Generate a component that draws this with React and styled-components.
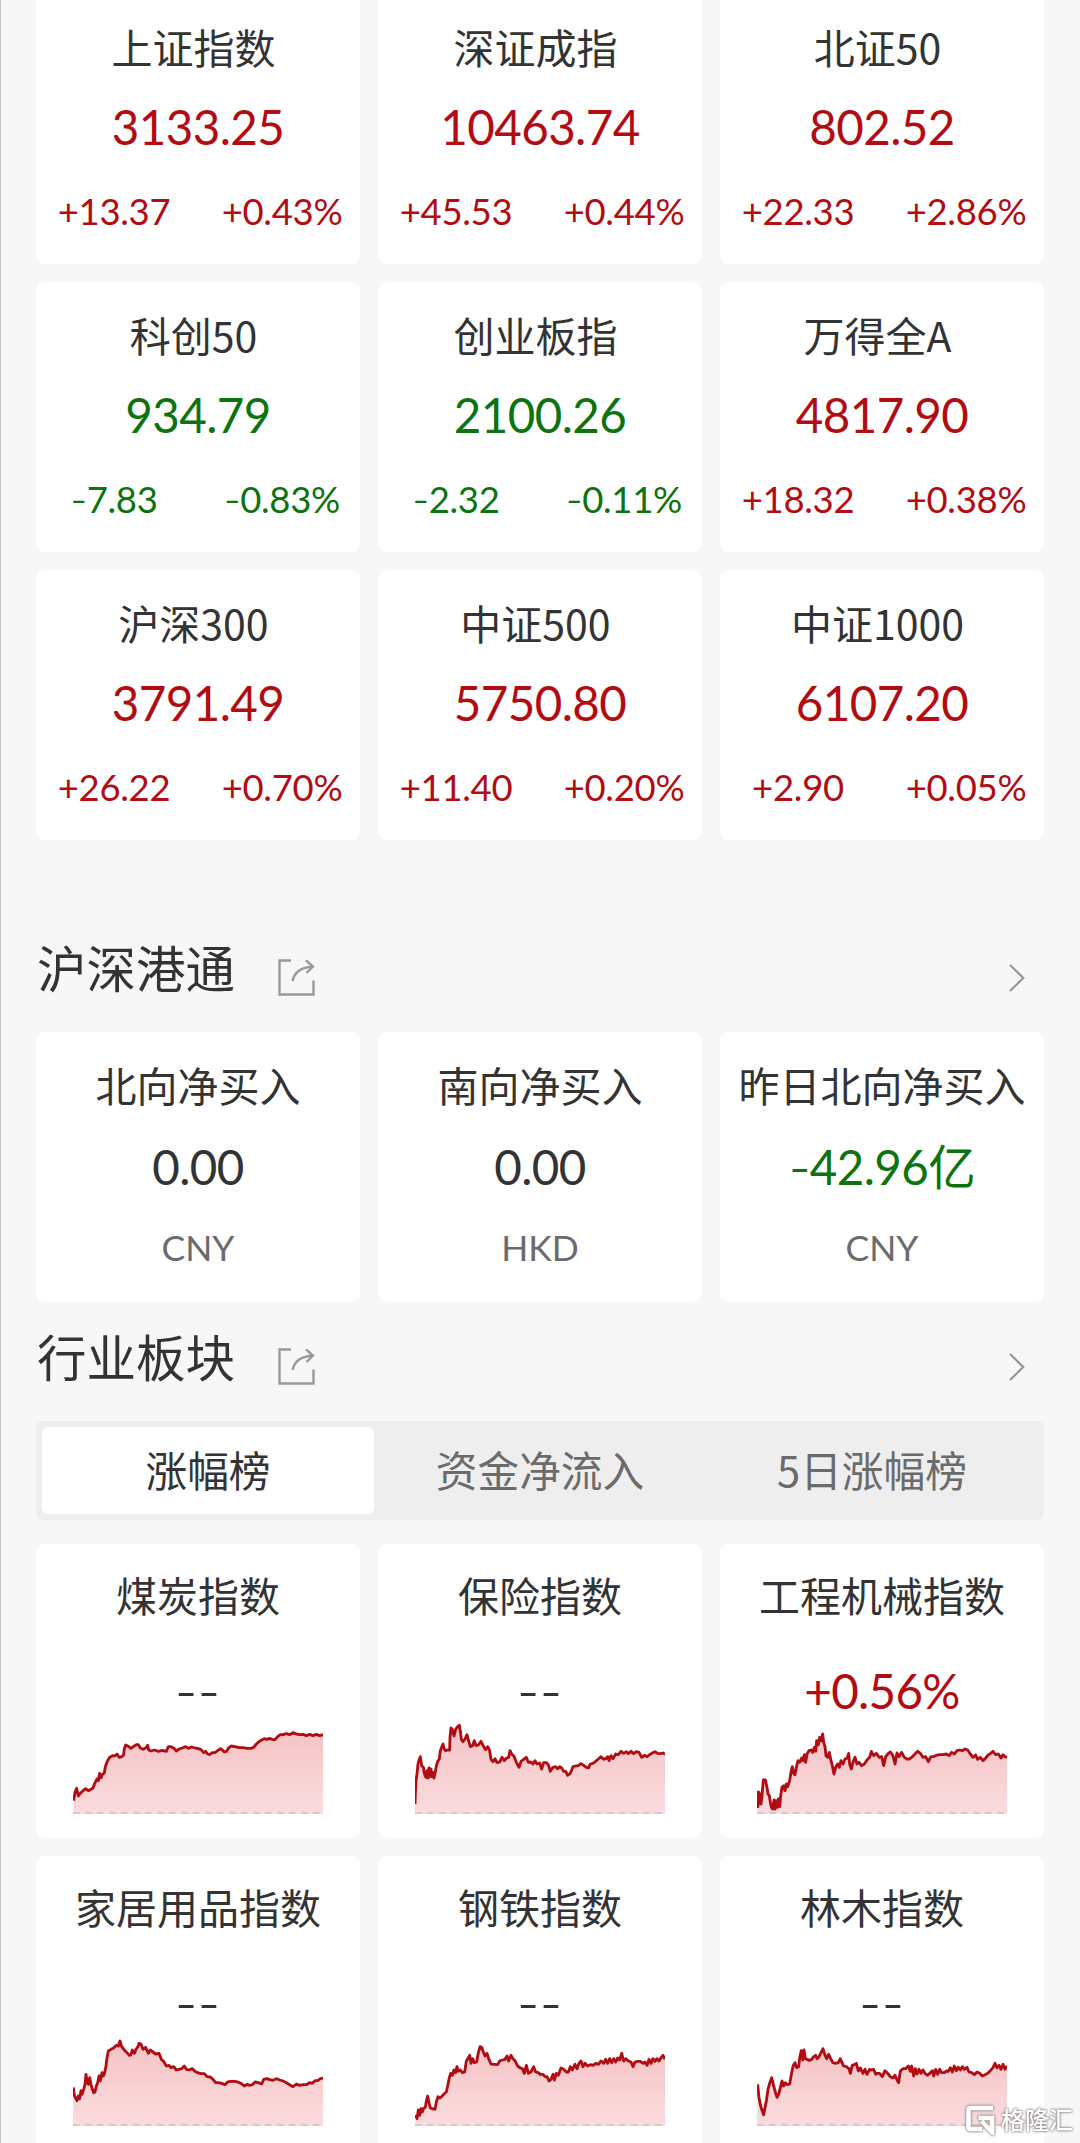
import {Component} from 'react'

import styled, {createGlobalStyle} from 'styled-components'

const colors = {
  up: '#b20c12',
  down: '#0d730f',
  flat: '#333333',
}

const indexList = [
  {name: '上证指数', price: '3133.25', change: '+13.37', percent: '+0.43%'},
  {name: '深证成指', price: '10463.74', change: '+45.53', percent: '+0.44%'},
  {name: '北证50', price: '802.52', change: '+22.33', percent: '+2.86%'},
  {name: '科创50', price: '934.79', change: '-7.83', percent: '-0.83%'},
  {name: '创业板指', price: '2100.26', change: '-2.32', percent: '-0.11%'},
  {name: '万得全A', price: '4817.90', change: '+18.32', percent: '+0.38%'},
  {name: '沪深300', price: '3791.49', change: '+26.22', percent: '+0.70%'},
  {name: '中证500', price: '5750.80', change: '+11.40', percent: '+0.20%'},
  {name: '中证1000', price: '6107.20', change: '+2.90', percent: '+0.05%'},
]

const flowList = [
  {name: '北向净买入', amount: '0.00', currency: 'CNY', trend: 'flat'},
  {name: '南向净买入', amount: '0.00', currency: 'HKD', trend: 'flat'},
  {name: '昨日北向净买入', amount: '-42.96亿', currency: 'CNY', trend: 'down'},
]

const tabList = ['涨幅榜', '资金净流入', '5日涨幅榜']

// points are drawn in a 750 x 300 box, the dashed base line is at 296
const sectorList = [
  {
    name: '煤炭指数',
    value: '--',
    trend: 'flat',
    points:
      '2,260 6,235 11,223 16,246 22,238 30,230 38,224 46,230 54,226 60,222 65,208 72,195 76,200 80,178 84,192 88,182 94,176 97,158 103,142 110,130 118,125 125,126 132,120 138,130 146,128 152,122 154,104 158,93 166,97 174,103 182,97 190,92 196,92 202,102 210,106 218,102 224,94 227,108 234,111 244,108 256,112 268,109 280,112 286,98 294,98 302,102 310,111 318,105 328,102 338,98 346,103 356,99 366,102 376,104 384,107 392,116 398,112 404,120 410,122 418,116 426,116 434,110 442,104 448,108 454,114 460,112 468,101 474,96 486,98 498,101 510,101 522,103 534,103 542,100 550,90 558,83 566,78 574,74 582,76 590,73 598,76 606,77 614,68 622,62 630,62 640,59 650,62 660,56 670,60 680,62 690,61 700,65 710,61 720,65 730,61 740,65 750,62',
  },
  {
    name: '保险指数',
    value: '--',
    trend: 'flat',
    points:
      '0,270 1,240 3,200 6,180 9,150 12,138 16,128 20,155 25,160 28,178 33,190 36,170 39,192 42,162 45,188 48,165 51,188 54,175 57,192 61,174 64,156 68,142 73,135 76,110 80,100 84,90 88,105 92,110 98,108 104,108 105,70 108,42 112,46 117,66 122,46 128,38 133,34 136,52 139,76 144,83 150,75 156,62 160,78 166,98 172,96 178,80 183,95 190,93 198,82 205,96 212,107 218,98 224,110 228,136 234,143 240,134 246,146 254,144 261,130 268,140 275,132 281,130 285,110 290,120 297,127 304,145 312,160 318,142 326,136 334,130 340,145 348,144 354,150 360,140 366,150 374,147 380,165 386,146 394,146 400,152 406,172 414,160 422,158 428,164 434,158 440,162 446,172 452,172 458,184 466,178 474,158 482,156 490,155 498,149 506,154 514,160 520,162 526,150 534,148 542,142 550,135 558,128 566,136 572,134 578,128 582,140 588,125 594,134 602,120 610,122 618,112 626,118 634,113 640,119 648,112 656,119 664,113 672,115 680,130 688,124 696,128 704,122 712,117 720,113 728,118 736,119 744,117 750,121',
  },
  {
    name: '工程机械指数',
    value: '+0.56%',
    trend: 'up',
    points:
      '0,230 3,278 6,235 9,255 12,270 15,245 19,198 25,198 30,220 33,240 37,245 40,265 43,280 47,285 51,258 54,285 57,260 61,280 64,255 68,278 71,245 75,220 80,215 84,230 88,210 92,218 98,200 102,175 106,158 110,178 114,182 118,160 123,140 128,145 134,132 138,140 142,122 146,145 150,120 156,110 162,108 167,115 172,100 176,112 179,80 184,92 188,70 193,80 197,60 200,85 204,98 207,125 212,130 217,115 222,140 226,155 231,180 236,160 242,150 247,160 252,140 258,150 264,135 270,133 275,118 278,150 283,165 288,145 294,130 300,150 306,145 314,155 322,150 330,138 338,130 343,112 350,125 358,118 366,130 374,128 380,155 386,128 394,118 400,114 408,125 414,150 420,117 426,128 434,115 442,130 450,135 458,135 466,128 474,120 482,112 490,118 498,130 506,128 514,143 522,128 530,128 538,124 548,122 558,122 568,120 576,125 584,115 592,120 600,110 608,108 616,110 624,105 632,108 640,120 648,130 656,123 662,136 670,130 678,140 686,132 694,122 702,118 708,112 716,122 724,120 732,132 738,122 744,128 750,130',
  },
  {
    name: '家居用品指数',
    value: '--',
    trend: 'flat',
    points:
      '1,184 4,208 8,216 12,224 16,210 20,218 24,194 27,205 32,190 36,176 39,145 42,165 46,175 50,155 54,175 58,190 62,200 66,198 70,180 74,170 78,150 82,165 87,140 91,150 95,140 99,120 102,95 106,75 114,70 122,66 130,58 136,60 141,45 146,62 154,72 162,80 169,88 174,86 178,72 184,82 190,68 195,62 198,52 204,55 210,70 218,64 226,82 232,72 240,78 248,84 258,82 265,100 272,106 280,120 288,118 294,125 302,122 310,132 318,130 326,128 334,120 340,130 348,132 358,128 366,136 374,140 384,143 394,143 402,152 412,153 420,160 428,170 438,170 446,172 456,176 464,168 474,166 484,166 494,168 504,172 514,180 522,175 530,178 538,176 546,168 556,170 566,174 572,160 582,158 590,161 600,163 610,158 620,162 630,165 640,170 650,176 660,182 670,174 680,178 690,176 700,176 710,170 718,172 726,164 734,164 742,158 750,156',
  },
  {
    name: '钢铁指数',
    value: '--',
    trend: 'flat',
    points:
      '2,266 6,278 10,252 14,268 18,248 22,258 26,246 31,244 34,225 38,210 42,230 46,246 52,248 60,250 64,228 69,212 74,216 80,212 87,204 94,198 99,175 103,155 107,142 112,148 117,132 122,140 126,122 130,136 136,132 142,140 149,138 154,105 159,98 164,88 168,112 173,98 178,110 185,108 190,80 195,62 200,64 205,78 210,90 216,82 221,98 228,114 238,115 248,116 254,105 262,102 270,100 276,90 281,105 288,88 294,98 300,104 308,120 316,126 322,128 328,142 334,118 340,142 348,138 356,122 362,138 370,140 376,145 384,145 390,152 396,152 402,165 408,160 414,145 418,162 424,142 430,148 438,126 446,130 454,138 460,138 466,122 472,132 480,115 486,128 492,112 498,105 504,122 510,112 518,120 526,116 534,118 542,112 550,115 558,105 566,112 572,100 578,112 584,98 590,110 596,98 602,108 608,96 614,102 620,82 626,105 632,98 640,105 648,108 654,122 660,108 668,106 676,106 684,112 690,108 696,118 702,100 708,112 714,98 720,106 726,98 732,105 738,95 744,88 750,100',
  },
  {
    name: '林木指数',
    value: '--',
    trend: 'flat',
    points:
      '2,175 6,215 11,240 16,255 20,266 24,245 28,225 33,190 38,172 44,155 49,175 54,195 60,214 65,205 70,185 75,165 80,180 85,170 91,176 98,174 104,140 109,118 114,110 119,125 125,122 129,90 133,74 137,102 141,72 145,98 150,100 157,103 164,100 170,92 176,88 180,98 186,92 192,80 198,68 203,85 209,98 215,85 221,98 228,110 236,112 244,110 250,98 254,108 260,120 268,122 276,128 280,142 286,118 292,116 298,112 304,135 310,126 318,142 324,130 330,145 338,130 344,132 350,130 356,145 362,142 368,142 376,152 384,134 392,142 400,152 408,156 414,148 420,162 425,170 430,135 438,128 446,128 454,120 460,136 464,120 470,150 475,128 480,144 486,130 492,142 498,132 504,142 512,148 520,140 526,134 530,150 536,130 542,145 548,130 554,140 562,140 568,135 574,136 580,125 586,138 592,120 598,134 604,124 610,132 616,122 622,130 630,124 636,138 644,140 652,146 660,138 668,142 676,150 684,146 692,142 700,134 708,125 714,112 720,125 726,118 732,130 738,115 744,130 750,120',
  },
]

const getTrend = text => (text.startsWith('-') ? 'down' : 'up')

// leading minus signs use a wider dash than the digits font has
const Figure = ({text}) =>
  text.startsWith('-') ? (
    <>
      <Minus>-</Minus>
      {text.slice(1)}
    </>
  ) : (
    text
  )

const ShareIcon = () => (
  <svg width="37" height="37" viewBox="0 0 37 37" fill="none">
    <path d="M13 1.500H1.500V35.500H35.500V21.500" stroke="#999999" strokeWidth="2.4" />
    <path
      d="M14.500 22C16.500 13 22.500 8.200 35 7.800M28 1.300L35 7.600L28.500 14"
      stroke="#999999"
      strokeWidth="2.4"
    />
  </svg>
)

const ChevronIcon = () => (
  <svg width="16" height="28" viewBox="0 0 16 28" fill="none">
    <path d="M1 1L14.300 14L1 27" stroke="#969696" strokeWidth="2.2" />
  </svg>
)

const Sparkline = ({id, points}) => (
  <Chart viewBox="0 0 750 300">
    <defs>
      <linearGradient id={id} x1="0" y1="0" x2="0" y2="1">
        <stop offset="0" stopColor="#f5c3c5" />
        <stop offset="1" stopColor="#fadcde" />
      </linearGradient>
    </defs>
    <polygon points={`0,300 ${points} 750,300`} fill={`url(#${id})`} />
    <path
      d="M0 297H750"
      stroke="#c4acae"
      strokeWidth="3"
      strokeDasharray="20 16"
    />
    <polyline
      points={points}
      fill="none"
      stroke="#b20c12"
      strokeWidth="8.500"
      strokeLinejoin="round"
    />
  </Chart>
)

const SectionHeader = ({title}) => (
  <Header>
    <HeaderTitle>{title}</HeaderTitle>
    <ShareIcon />
    <HeaderMore>
      <ChevronIcon />
    </HeaderMore>
  </Header>
)

export default class App extends Component {
  state = {
    activeTab: 0,
  }

  changeTab = index => {
    this.setState({activeTab: index})
  }

  render() {
    const {activeTab} = this.state
    return (
      <>
        <GlobalStyle />
        <Page>
          <IndexGrid>
            {indexList.map(item => (
              <IndexCard key={item.name}>
                <IndexName>{item.name}</IndexName>
                <Price $trend={getTrend(item.change)}>{item.price}</Price>
                <ChangeRow $trend={getTrend(item.change)}>
                  <Change>
                    <Figure text={item.change} />
                  </Change>
                  <Change>
                    <Figure text={item.percent} />
                  </Change>
                </ChangeRow>
              </IndexCard>
            ))}
          </IndexGrid>

          <FlowSection>
            <SectionHeader title="沪深港通" />
            <Grid>
              {flowList.map(item => (
                <FlowCard key={item.name}>
                  <CardName>{item.name}</CardName>
                  <Amount $trend={item.trend}>
                    <Figure text={item.amount} />
                  </Amount>
                  <Currency>{item.currency}</Currency>
                </FlowCard>
              ))}
            </Grid>
          </FlowSection>

          <SectionHeader title="行业板块" />
          <Tabs>
            {tabList.map((tab, index) => (
              <Tab
                key={tab}
                type="button"
                $active={index === activeTab}
                onClick={() => this.changeTab(index)}
              >
                {tab}
              </Tab>
            ))}
          </Tabs>
          <Grid>
            {sectorList.map((item, index) => (
              <SectorCard key={item.name}>
                <CardName>{item.name}</CardName>
                {item.value === '--' ? (
                  <EmptyValue>--</EmptyValue>
                ) : (
                  <SectorValue $trend={item.trend}>{item.value}</SectorValue>
                )}
                <Sparkline id={`fill${index}`} points={item.points} />
              </SectorCard>
            ))}
          </Grid>

          <Watermark>
            <WatermarkLogo viewBox="0 0 32 32" fill="none">
              <path
                d="M29 5H6.500Q4.500 5 4.500 7V24Q4.500 26 6.500 26H18M14.500 15H28V29L17.500 18"
                stroke="#ffffff"
                strokeWidth="4.600"
              />
            </WatermarkLogo>
            <WatermarkText>格隆汇</WatermarkText>
          </Watermark>
        </Page>
      </>
    )
  }
}

const GlobalStyle = createGlobalStyle`
  body {
    margin: 0;
    background-color: #f7f7f7;
  }
`

const Page = styled.div`
  position: relative;
  box-sizing: border-box;
  width: 1080px;
  height: 2143px;
  padding: 0 36px 0 35px;
  border-left: 1px solid #c6c6c6;
  overflow: hidden;
  background-color: #f7f7f7;
  color: #333333;
  font-family: Lato, 'Noto Sans CJK SC', sans-serif;
`

const Grid = styled.div`
  display: grid;
  grid-template-columns: repeat(3, 324px);
  gap: 18px;
`

const IndexGrid = styled(Grid)`
  margin-top: -6px;
`

const Card = styled.div`
  box-sizing: border-box;
  display: flex;
  flex-direction: column;
  align-items: center;
  background-color: #ffffff;
  border-radius: 9px;
  white-space: nowrap;
`

const IndexCard = styled(Card)`
  height: 270px;
  padding-top: 22px;
`

const FlowCard = styled(Card)`
  height: 270px;
  padding-top: 22px;
`

const SectorCard = styled(Card)`
  height: 294px;
  padding-top: 20px;
`

const CardName = styled.div`
  font-family: 'Noto Sans CJK SC', sans-serif;
  font-size: 41px;
  line-height: 60px;
`

const IndexName = styled(CardName)`
  padding-right: 9px;
`

const Price = styled.div`
  height: 60px;
  margin-top: 21px;
  color: ${props => colors[props.$trend]};
  font-size: 47.5px;
  line-height: 60px;
  letter-spacing: -0.6px;
`

const ChangeRow = styled.div`
  margin-top: 34px;
  display: grid;
  grid-template-columns: 168px 168px;
  color: ${props => colors[props.$trend]};
`

const Change = styled.div`
  font-size: 36.5px;
  line-height: 40px;
  letter-spacing: -0.3px;
  text-align: center;
`

const Minus = styled.span`
  font-family: Inter, sans-serif;
  font-weight: 300;
`

const FlowSection = styled.div`
  margin-top: 73px;
`

const Amount = styled(Price)`
  margin-top: 23px;
`

const Currency = styled.div`
  margin-top: 31px;
  color: #6b6b6b;
  font-size: 35.5px;
  line-height: 40px;
`

const Header = styled.div`
  box-sizing: border-box;
  height: 119px;
  padding: 10px 19px 0 1px;
  display: flex;
  align-items: center;

  svg {
    flex-shrink: 0;
  }
`

const HeaderTitle = styled.h2`
  width: 241px;
  margin: -21px 0 0;
  font-family: 'Noto Sans CJK SC', sans-serif;
  font-size: 49.5px;
  font-weight: 400;
  line-height: 70px;
`

const HeaderMore = styled.div`
  margin-left: auto;
  display: flex;
`

const Tabs = styled.div`
  box-sizing: border-box;
  height: 99px;
  margin-bottom: 24px;
  padding: 6px;
  display: grid;
  grid-template-columns: repeat(3, 1fr);
  background-color: #eeeeee;
  border-radius: 6px;
`

const Tab = styled.button`
  padding: 0 0 3px;
  border: 0;
  border-radius: 6px;
  background-color: ${props => (props.$active ? '#ffffff' : 'transparent')};
  color: ${props => (props.$active ? '#333333' : '#6b6b6b')};
  font-family: 'Noto Sans CJK SC', sans-serif;
  font-size: 41.7px;
  line-height: 60px;
  cursor: pointer;
`

const SectorValue = styled.div`
  margin-top: 37px;
  color: ${props => colors[props.$trend]};
  font-size: 47.5px;
  line-height: 60px;
  letter-spacing: -0.7px;
`

const EmptyValue = styled.div`
  margin-top: 38px;
  margin-bottom: -1px;
  font-family: Inter, sans-serif;
  font-size: 48px;
  font-weight: 300;
  line-height: 60px;
  letter-spacing: 1px;
`

const Chart = styled.svg`
  width: 250px;
  height: 100px;
  margin-top: -7px;
`

const Watermark = styled.div`
  position: absolute;
  right: 7px;
  bottom: 8px;
  display: flex;
  align-items: center;
  gap: 5px;
`

const WatermarkLogo = styled.svg`
  width: 32px;
  height: 32px;
  filter: drop-shadow(0 0 1px #8d8687) drop-shadow(0 0 1px #a59c9d);
`

const WatermarkText = styled.span`
  color: #ffffff;
  font-family: 'Noto Sans CJK SC', sans-serif;
  font-size: 24px;
  font-weight: 500;
  line-height: 32px;
  filter: drop-shadow(0 0 1px #8d8687) drop-shadow(0 0 1px #a59c9d);
`
